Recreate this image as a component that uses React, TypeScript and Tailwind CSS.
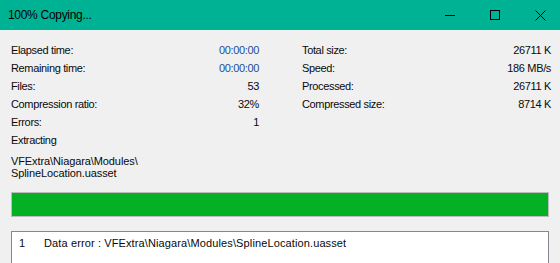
const FONT = { fontFamily: '"Liberation Sans", Arial, sans-serif' }

interface StatRow {
  label: string
  value: string
  blue?: boolean
}

const LEFT: StatRow[] = [
  { label: 'Elapsed time:', value: '00:00:00', blue: true },
  { label: 'Remaining time:', value: '00:00:00', blue: true },
  { label: 'Files:', value: '53' },
  { label: 'Compression ratio:', value: '32%' },
  { label: 'Errors:', value: '1' },
]

const RIGHT: StatRow[] = [
  { label: 'Total size:', value: '26711 K' },
  { label: 'Speed:', value: '186 MB/s' },
  { label: 'Processed:', value: '26711 K' },
  { label: 'Compressed size:', value: '8714 K' },
]

function Stats({ rows }: { rows: StatRow[] }) {
  return (
    <div className="flex flex-col">
      {rows.map((r) => (
        <div key={r.label} className="flex h-[18px] items-center justify-between">
          <span>{r.label}</span>
          <span className={r.blue ? 'text-[#1d4c98]' : ''}>{r.value}</span>
        </div>
      ))}
    </div>
  )
}

function TitleBar() {
  return (
    <div className="flex h-[30px] items-center bg-[#00b294] text-black">
      <span className="pl-[8px] text-[12px] tracking-[-0.3px]">100% Copying...</span>
      <div className="ml-auto flex h-full">
        <div className="flex w-[45px] items-center justify-center">
          <svg width="10" height="10" viewBox="0 0 10 10">
            <path d="M0 5.5H10" stroke="#000" strokeWidth="1" />
          </svg>
        </div>
        <div className="flex w-[45px] items-center justify-center">
          <svg width="10" height="10" viewBox="0 0 10 10">
            <rect x="0.5" y="0.5" width="9" height="9" fill="none" stroke="#000" strokeWidth="1" />
          </svg>
        </div>
        <div className="flex w-[43px] items-center justify-center pl-[3px]">
          <svg width="11" height="11" viewBox="0 0 11 11">
            <path d="M0.5 0.5L10.5 10.5M10.5 0.5L0.5 10.5" stroke="#000" strokeWidth="1" />
          </svg>
        </div>
      </div>
    </div>
  )
}

export default function App() {
  return (
    <div className="h-[263px] w-[560px] overflow-hidden bg-[#f0f0f0] text-[11px] tracking-[-0.35px] text-[#0a0a0a]" style={FONT}>
      <TitleBar />
      <div className="px-[11px] pt-[11px]">
        <div className="grid grid-cols-[248px_249px] gap-x-[43px]">
          <Stats rows={LEFT} />
          <Stats rows={RIGHT} />
        </div>
        <div className="flex h-[18px] items-center">Extracting</div>
        <div className="mt-[6px] leading-[12px] tracking-[-0.1px]">
          <div>VFExtra\Niagara\Modules\</div>
          <div>SplineLocation.uasset</div>
        </div>
        <div className="mt-[13px] h-[25px] border border-[#bcbcbc] bg-[#e6e6e6]">
          <div className="h-full w-full bg-[#06b025]" />
        </div>
        <div className="mt-[14px] h-[60px] border border-[#828790] bg-white pt-[5px]">
          <div className="flex leading-[12px] tracking-[0.12px]">
            <span className="w-[32px] pl-[7px]">1</span>
            <span>Data error : VFExtra\Niagara\Modules\SplineLocation.uasset</span>
          </div>
        </div>
      </div>
    </div>
  )
}
